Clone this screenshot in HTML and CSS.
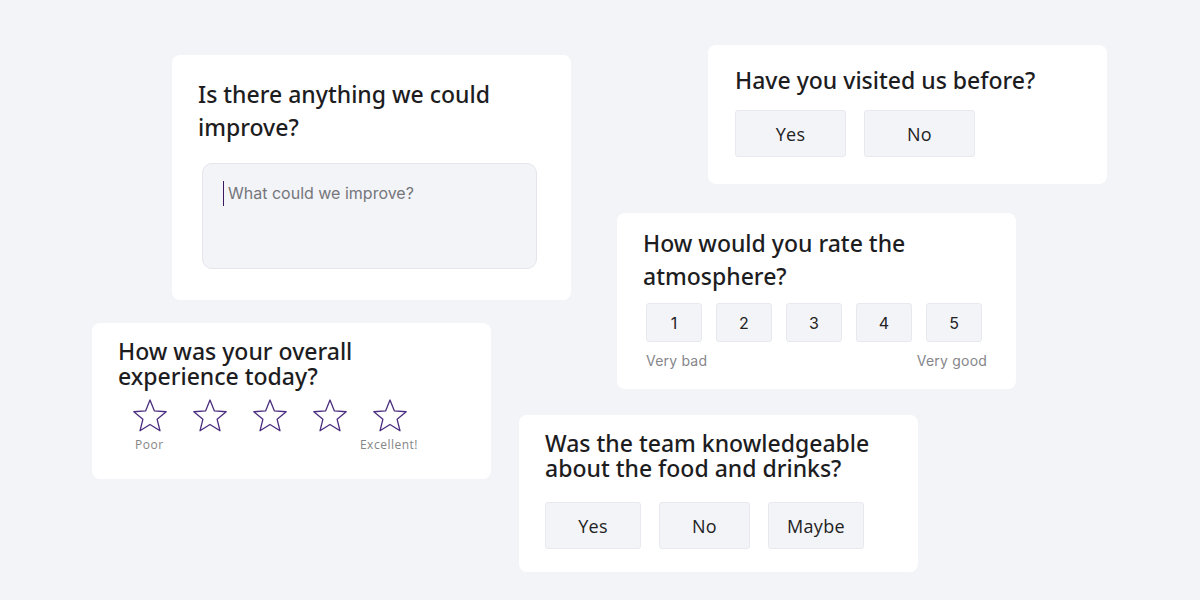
FILE: index.html
```html
<!DOCTYPE html>
<html lang="en">
<head>
    <meta charset="UTF-8">
    <title>Feedback questions</title>
    <link rel="stylesheet" href="styles.css">
</head>
<body>
    <div class="canvas">

        <div class="card card-improve">
            <h2 class="question">Is there anything we could<br>improve?</h2>
            <div class="textbox">
                <span class="caret"></span>
                <span class="placeholder">What could we improve?</span>
            </div>
        </div>

        <div class="card card-visited">
            <h2 class="question">Have you visited us before?</h2>
            <div class="choices">
                <button class="choice wide">Yes</button>
                <button class="choice wide">No</button>
            </div>
        </div>

        <div class="card card-atmosphere">
            <h2 class="question">How would you rate the<br>atmosphere?</h2>
            <div class="scale">
                <button class="num">1</button>
                <button class="num">2</button>
                <button class="num">3</button>
                <button class="num">4</button>
                <button class="num">5</button>
            </div>
            <div class="scale-labels">
                <span>Very bad</span>
                <span>Very good</span>
            </div>
        </div>

        <div class="card card-overall">
            <h2 class="question tight">How was your overall<br>experience today?</h2>
            <div class="stars" id="stars"></div>
            <div class="star-labels">
                <span>Poor</span>
                <span>Excellent!</span>
            </div>
        </div>

        <div class="card card-team">
            <h2 class="question tight">Was the team knowledgeable<br>about the food and drinks?</h2>
            <div class="choices">
                <button class="choice">Yes</button>
                <button class="choice narrow">No</button>
                <button class="choice">Maybe</button>
            </div>
        </div>

    </div>

    <script>
        // five outline stars, same shape
        const STAR = '<svg class="star" viewBox="0 0 36 34" width="36" height="34">' +
            '<polygon points="18,1 22.41,11.93 34.17,12.75 25.13,20.32 27.99,31.75 18,25.5 8.01,31.75 10.87,20.32 1.83,12.75 13.59,11.93" ' +
            'fill="none" stroke="#4b2d7f" stroke-width="1.3" stroke-linejoin="round"/></svg>';
        const stars = document.getElementById("stars");
        for (let i = 0; i < 5; i++) {
            stars.innerHTML += STAR;
        }
    </script>
</body>
</html>
```

FILE: styles.css
```css
body {
    margin: 0;
    background-color: #f3f4f8;
    font-family: "Noto Sans", Arial, sans-serif;
}
.canvas {
    position: relative;
    width: 1200px;
    height: 600px;
    overflow: hidden;
}
.card {
    position: absolute;
    width: 399px;
    box-sizing: border-box;
    background-color: #fff;
    border-radius: 8px;
    padding-left: 26px;
    padding-right: 26px;
}
.card-improve {
    left: 172px;
    top: 55px;
    height: 245px;
    padding-top: 23px;
}
.card-visited {
    left: 708px;
    top: 45px;
    height: 139px;
    padding-top: 19px;
    padding-left: 27px;
}
.card-atmosphere {
    left: 617px;
    top: 213px;
    height: 176px;
    padding-top: 14px;
}
.card-overall {
    left: 92px;
    top: 323px;
    height: 156px;
    padding-top: 16px;
}
.card-team {
    left: 519px;
    top: 415px;
    height: 157px;
    padding-top: 16px;
}
.question {
    margin: 0;
    font-size: 23px;
    font-weight: 500;
    line-height: 33px;
    color: #1d1d1f;
}
.question.tight {
    line-height: 25px;
}

/* text area */
.textbox {
    display: flex;
    align-items: flex-start;
    gap: 4px;
    margin-top: 19px;
    margin-left: 4px;
    width: 335px;
    height: 106px;
    box-sizing: border-box;
    padding: 17px 20px;
    background-color: #f3f4f8;
    border: 1px solid #e5e6eb;
    border-radius: 10px;
}
.caret {
    width: 1px;
    height: 25px;
    background-color: #3a1a5e;
}
.placeholder {
    font-family: Inter, sans-serif;
    font-size: 16px;
    line-height: 25px;
    color: #75767b;
}

/* yes / no buttons */
.choices {
    display: flex;
    gap: 18px;
    margin-top: 21px;
}
.card-visited .choices {
    margin-top: 13px;
}
.choice {
    width: 96px;
    height: 47px;
    padding: 0;
    background-color: #f3f4f8;
    border: 1px solid #e8e9ee;
    border-radius: 3px;
    font-family: "Open Sans", sans-serif;
    font-size: 18px;
    color: #222;
    letter-spacing: 0.3px;
}
.choice.wide {
    width: 111px;
}
.choice.narrow {
    width: 91px;
}

/* 1-5 scale */
.scale {
    display: flex;
    gap: 14px;
    margin-top: 10px;
    margin-left: 3px;
}
.num {
    width: 56px;
    height: 39px;
    padding: 0;
    background-color: #f3f4f8;
    border: 1px solid #e8e9ee;
    border-radius: 3px;
    font-family: Inter, sans-serif;
    font-size: 16px;
    color: #222;
}
.scale-labels {
    display: flex;
    justify-content: space-between;
    width: 341px;
    margin-top: 10px;
    margin-left: 3px;
    font-family: Inter, sans-serif;
    font-size: 14px;
    line-height: 17px;
    color: #85868b;
    letter-spacing: 0.2px;
}

/* stars */
.stars {
    display: flex;
    gap: 24px;
    margin-top: 10px;
    margin-left: 14px;
}
.star-labels {
    display: flex;
    justify-content: space-between;
    width: 283px;
    margin-top: 5px;
    margin-left: 17px;
    font-family: "Open Sans", sans-serif;
    font-size: 12px;
    line-height: 13px;
    color: #858585;
    letter-spacing: 0.5px;
}
```
